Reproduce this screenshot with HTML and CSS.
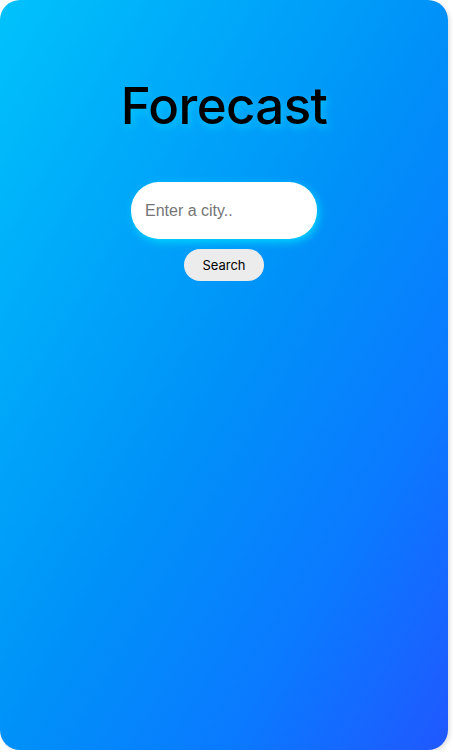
FILE: index.html
```html
<!DOCTYPE html>
<html>
<head>
<meta charset="utf-8">
<link rel="stylesheet" href="styles.css">
</head>
<body>
<div class="card">
  <h1 class="title">Forecast</h1>
  <div class="search">
    <input class="city" type="text" placeholder="Enter a city..">
    <button class="btn">Search</button>
  </div>
</div>
</body>
</html>
```
FILE: styles.css
```css
html, body {
  margin: 0;
  padding: 0;
  background: #ffffff;
}
.card {
  width: 448px;
  height: 750px;
  border-radius: 20px;
  background: linear-gradient(to bottom right, #00c2fb 0%, #0091f8 50%, #0a7aff 75%, #2058ff 100%);
  box-shadow: 2px 2px 4px rgba(0,0,0,0.12);
  display: flex;
  flex-direction: column;
  align-items: center;
  box-sizing: border-box;
  padding-top: 76px;
}
.title {
  margin: 0;
  font-family: "Inter", "Open Sans", sans-serif;
  font-weight: 500;
  font-size: 51px;
  line-height: 60px;
  color: #000;
  text-shadow: 2px 4px 8px rgba(0, 200, 255, 0.9);
  letter-spacing: -0.6px;
}
.search {
  margin-top: 46px;
  display: flex;
  flex-direction: column;
  align-items: center;
  gap: 10px;
}
.city {
  width: 186px;
  height: 57px;
  box-sizing: border-box;
  border: none;
  outline: none;
  border-radius: 28px;
  padding: 0 14px;
  font-family: "Liberation Sans", Arial, sans-serif;
  font-size: 16px;
  background: #fff;
  box-shadow: 2px 3px 8px rgba(0, 220, 255, 0.9);
}
.city::placeholder {
  color: #757575;
}
.btn {
  width: 80px;
  height: 32px;
  border: none;
  border-radius: 16px;
  background: #ececec;
  font-family: "Inter", "Open Sans", sans-serif;
  font-size: 13px;
  color: #000;
  padding: 0;
}
```
